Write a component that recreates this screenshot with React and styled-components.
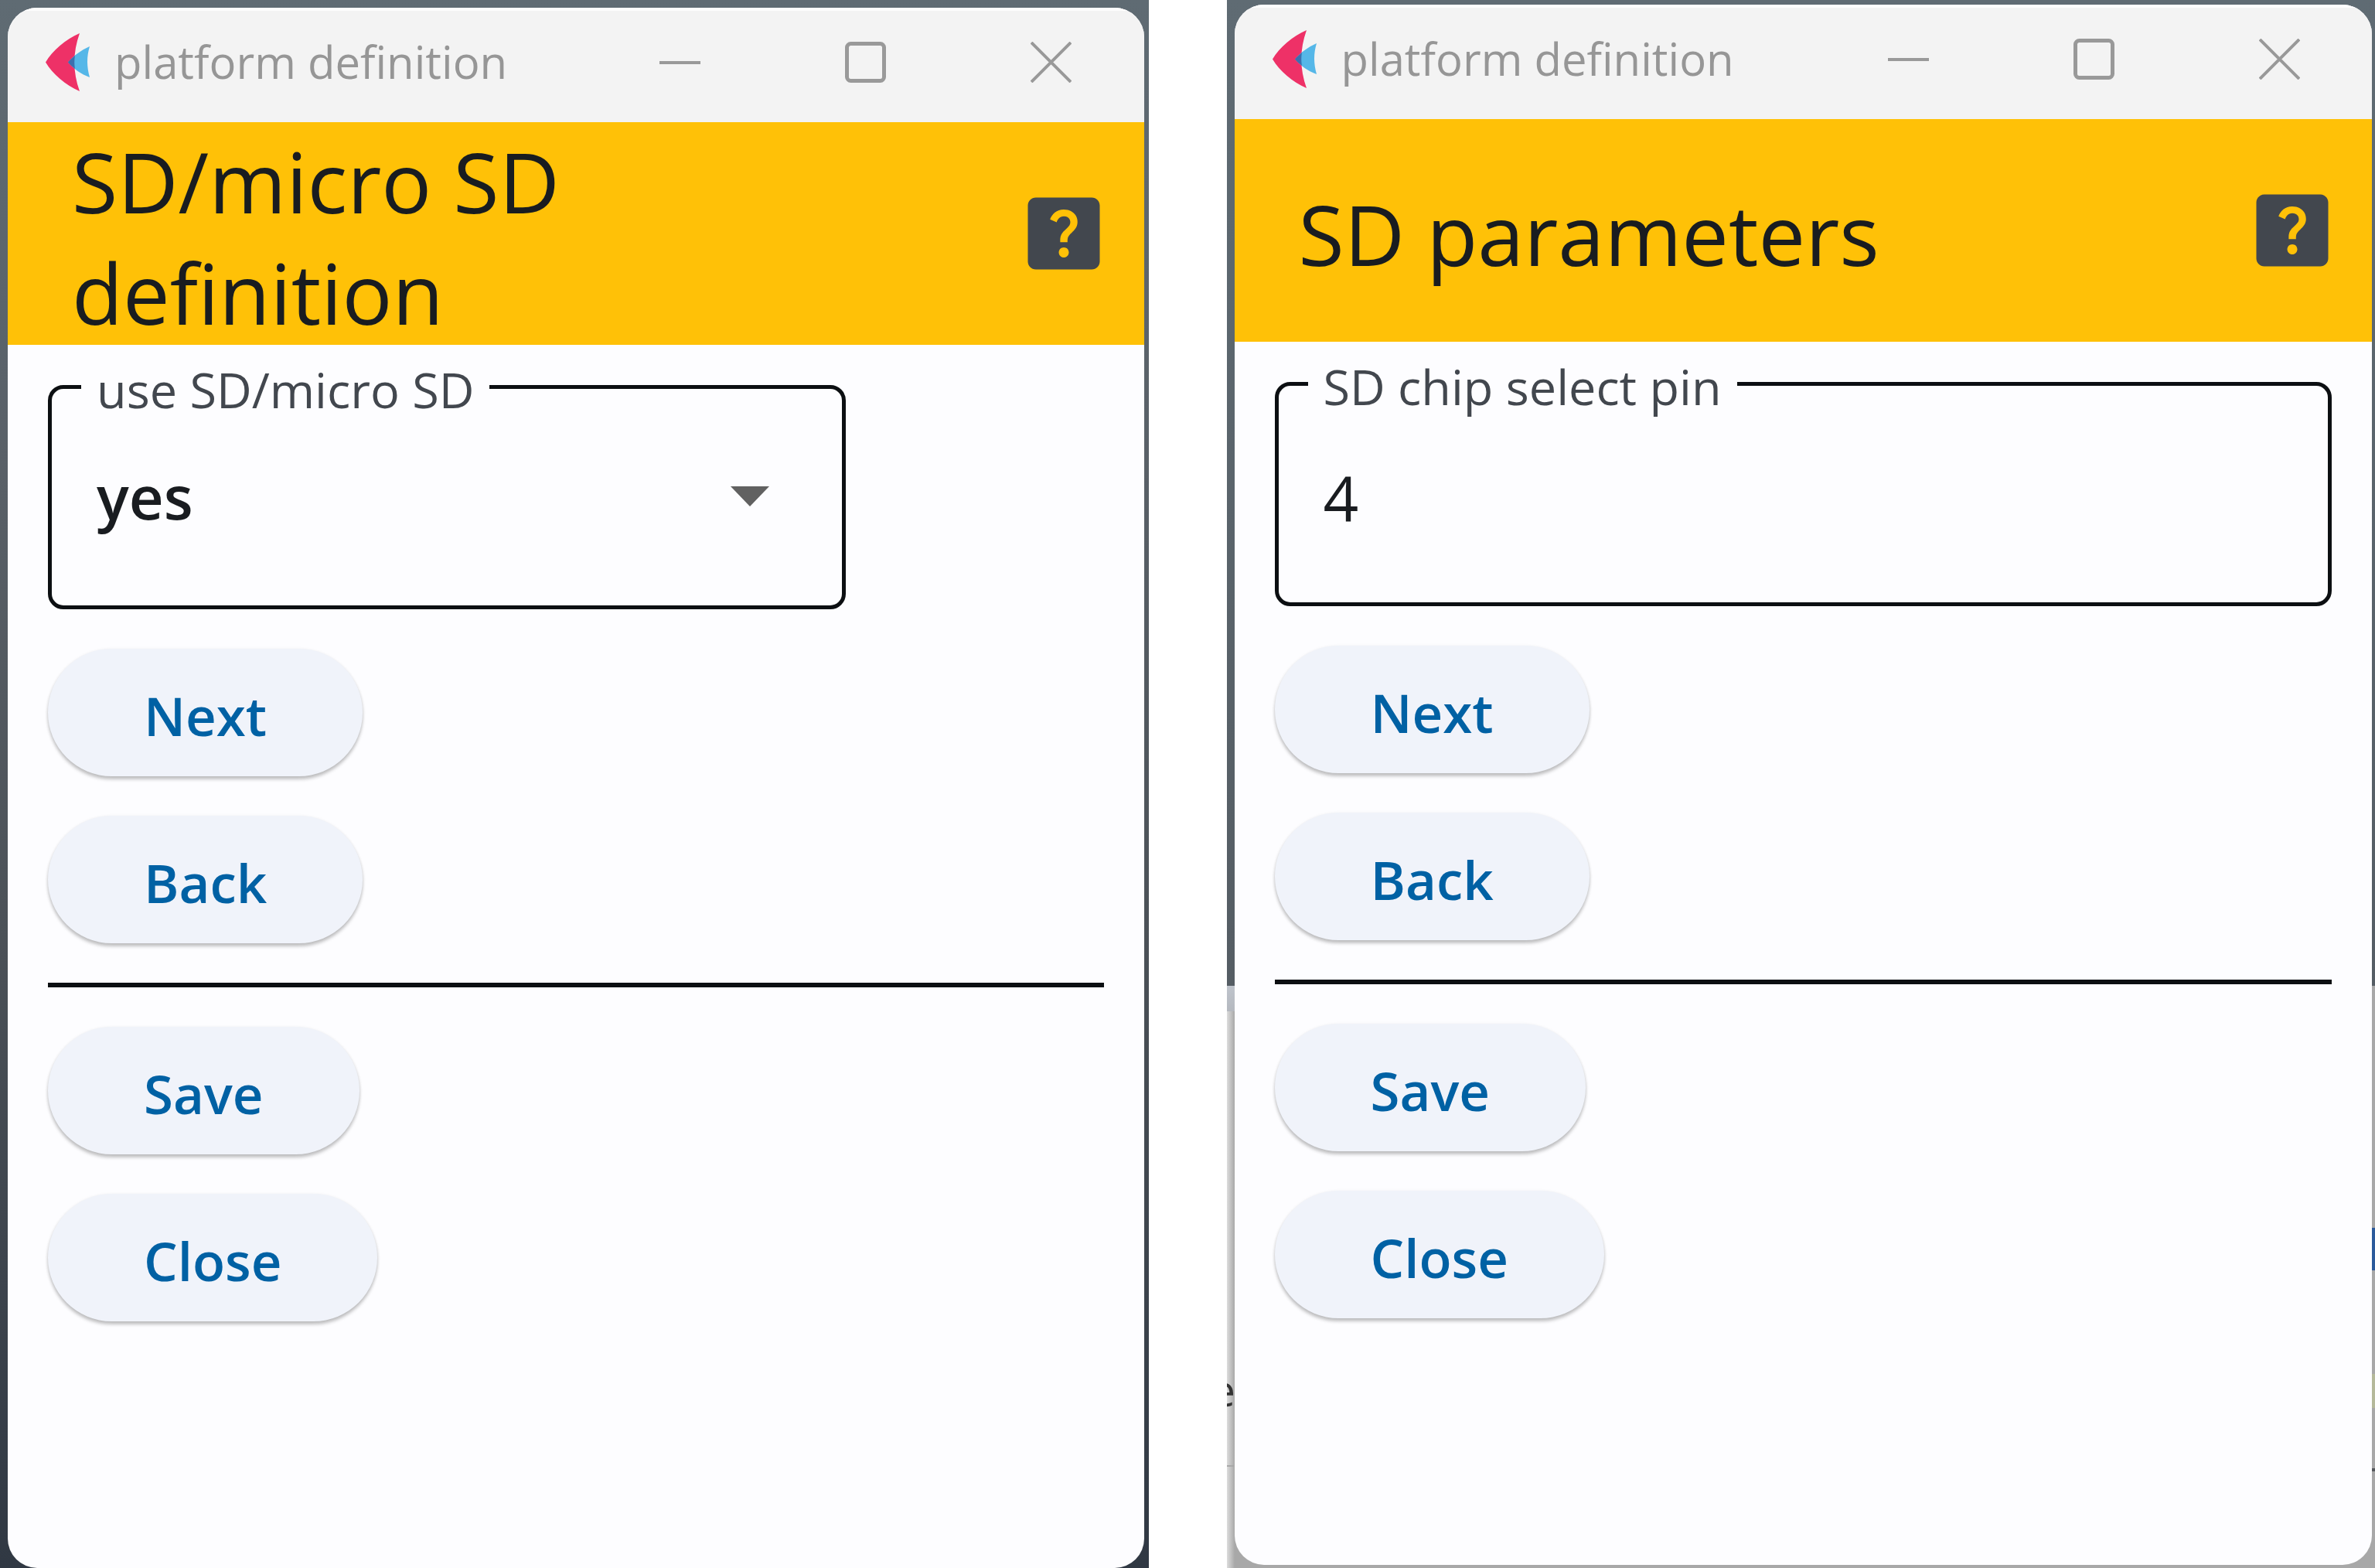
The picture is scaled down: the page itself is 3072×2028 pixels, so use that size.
import React, { useId } from "react";
import styled, { createGlobalStyle } from "styled-components";

const GlobalStyle = createGlobalStyle`
  * { box-sizing: border-box; }
  body {
    margin: 0;
    background: #ffffff;
    font-family: "Open Sans", "Noto Sans", sans-serif;
  }
`;

const Page = styled.div`
  display: grid;
  grid-template-columns: minmax(0, 1fr) minmax(0, 1fr);
  gap: 101px;
  min-height: 100vh;
`;

const DarkDesktop = styled.section`
  display: flex;
  padding: 10px 6px 0 10px;
  background: linear-gradient(#5f6b73, #596067 30%, #4b5157 60%, #303843);
`;

const MixedDesktop = styled.section`
  position: relative;
  display: flex;
  overflow: hidden;
  padding: 6px 4px 4px 10px;
  background:
    linear-gradient(#2b5a9b, #2b5a9b) right 1588px / 4px 55px no-repeat,
    linear-gradient(#b5b99a, #b5b99a) right 1777px / 4px 44px no-repeat,
    linear-gradient(#55585c, #55585c) right 1899px / 4px 4px no-repeat,
    linear-gradient(#a9a9a9, #a9a9a9) left 1895px / 10px 2px no-repeat,
    linear-gradient(#5f6b73, #555d64) left top / 100% 1275px no-repeat,
    linear-gradient(#bfc4cc, #b4b8bf) left 1275px / 10px 33px no-repeat,
    linear-gradient(90deg, #dcdcdc, #a8a8a8) left top / 10px 100% no-repeat,
    #a8a8a8;
`;

const DesktopText = styled.span`
  position: absolute;
  top: 1766px;
  left: -20px;
  font-size: 56px;
  line-height: 62px;
  color: #333333;
`;

const Window = styled.main`
  position: relative;
  flex: 1;
  min-width: 0;
  overflow: hidden;
  border-radius: 38px;
  background: #fdfdff;
`;

const TitleBar = styled.div`
  display: flex;
  align-items: center;
  height: 148px;
  padding: 0 0 12px 49px;
  border-top: 4px solid #fdfdfd;
  background: #f3f3f3;
`;

const WindowTitle = styled.span`
  flex: 1;
  padding-left: 32px;
  font-size: 58px;
  line-height: 80px;
  white-space: nowrap;
  color: #969696;
`;

const CaptionButton = styled.button`
  display: grid;
  place-items: center;
  width: 240px;
  height: 132px;
  padding: 0;
  border: 0;
  background: transparent;
`;

const AppBar = styled.header`
  display: flex;
  align-items: center;
  height: 288px;
  padding-left: 83px;
  background: #ffc107;
`;

const Heading = styled.h1`
  flex: 1;
  margin: 0;
  padding: 10px 83px 0 0;
  font-size: 108px;
  font-weight: 400;
  line-height: 144px;
  color: #191c20;
`;

const HelpButton = styled.button`
  display: grid;
  place-items: center;
  width: 207px;
  height: 207px;
  padding: 0;
  border: 0;
  background: transparent;
  color: #42474e;
`;

const Form = styled.form`
  display: flex;
  flex-direction: column;
  align-items: flex-start;
  gap: 51px;
  padding: 24px 52px;
`;

const Outline = styled.fieldset`
  width: ${(p) => (p.$compact ? "1032px" : "100%")};
  max-width: 100%;
  min-width: 0;
  height: 318px;
  margin: 0;
  padding: 0 38px;
  border: 5px solid #0c0f12;
  border-radius: 20px;
`;

const Legend = styled.legend`
  padding: 6px 20px 0;
  font-size: 63px;
  line-height: 55px;
  color: #42474e;
`;

const SelectBox = styled.div`
  display: grid;
  align-items: center;
  & > * { grid-area: 1 / 1; }
`;

const Select = styled.select`
  width: 100%;
  height: 222px;
  padding: 0 20px;
  border: 0;
  appearance: none;
  background: transparent;
  font-family: inherit;
  font-size: 78px;
  font-weight: 600;
  color: #191c20;
`;

const Arrow = styled.svg`
  justify-self: end;
  margin-right: 56px;
  pointer-events: none;
`;

const Input = styled.input`
  width: 100%;
  height: 230px;
  padding: 0 20px;
  border: 0;
  background: transparent;
  font-family: inherit;
  font-size: 80px;
  color: #191c20;
`;

const Button = styled.button`
  height: 165px;
  padding: 6px 124px 0;
  border: 0;
  border-radius: 83px;
  background: #f0f3fa;
  box-shadow: 0 4px 4px rgba(0, 0, 0, 0.22), 0 1px 4px rgba(0, 0, 0, 0.08);
  font-family: inherit;
  font-size: 69px;
  font-weight: 600;
  line-height: 96px;
  color: #0061a4;
`;

const Divider = styled.hr`
  width: 100%;
  height: 6px;
  margin: 0;
  border: 0;
  background: #0c0f12;
`;

function Logo() {
  return (
    <svg width="57" height="75" viewBox="0 0 57 75" aria-hidden="true">
      <path d="M44 0C26 8 9 22 0 37.500C9 53 26 67 44 75C35 50 35 25 44 0Z" fill="#ee3167" />
      <path d="M57 17C46 22 36 29 29 37.500C36 46 46 53 57 57C53 43 53 30 57 17Z" fill="#55b7e8" />
      <path d="M38 29C35 31.500 32 34 29 37.500C32 41 35 43.500 38 46C37 40 37 35 38 29Z" fill="#3c6fae" />
    </svg>
  );
}

function Captions() {
  return (
    <>
      <CaptionButton type="button" aria-label="Minimize">
        <svg width="53" height="53" viewBox="0 0 53 53" fill="none" stroke="#999999" strokeWidth="4">
          <path d="M0 27H53" />
        </svg>
      </CaptionButton>
      <CaptionButton type="button" aria-label="Maximize">
        <svg width="53" height="53" viewBox="0 0 53 53" fill="none" stroke="#999999" strokeWidth="5">
          <rect x="2.500" y="2.500" width="48" height="48" rx="5" />
        </svg>
      </CaptionButton>
      <CaptionButton type="button" aria-label="Close window">
        <svg width="53" height="53" viewBox="0 0 53 53" fill="none" stroke="#999999" strokeWidth="4">
          <path d="M1 1L52 52M52 1L1 52" />
        </svg>
      </CaptionButton>
    </>
  );
}

function HelpIcon() {
  return (
    <svg width="124" height="124" viewBox="0 0 24 24" fill="currentColor" aria-hidden="true">
      <path d="M19 3H5c-1.100 0-2 .9-2 2v14c0 1.100.9 2 2 2h14c1.100 0 2-.9 2-2V5c0-1.100-.9-2-2-2zm-6.990 15c-.7 0-1.260-.56-1.260-1.260 0-.71.56-1.250 1.260-1.250.71 0 1.250.54 1.250 1.250-.01.69-.54 1.260-1.250 1.260zm3.010-7.400c-.76 1.110-1.480 1.460-1.870 2.170-.16.29-.22.48-.22 1.410h-1.820c0-.49-.08-1.290.31-1.980.49-.87 1.420-1.390 1.960-2.160.57-.81.25-2.330-1.370-2.330-1.060 0-1.580.8-1.800 1.480l-1.650-.7C9.010 7.150 10.220 6 11.990 6c1.480 0 2.490.67 3.010 1.520.44.72.7 2.070.02 3.080z" />
    </svg>
  );
}

function DropdownField({ label, options }) {
  const id = useId();
  return (
    <Outline $compact>
      <Legend><label htmlFor={id}>{label}</label></Legend>
      <SelectBox>
        <Select id={id} defaultValue={options[0]}>
          {options.map((o) => <option key={o}>{o}</option>)}
        </Select>
        <Arrow width="50" height="26" viewBox="0 0 50 26" aria-hidden="true">
          <path d="M0 0H50L25 26Z" fill="#616161" />
        </Arrow>
      </SelectBox>
    </Outline>
  );
}

function TextField({ label, value }) {
  const id = useId();
  return (
    <Outline>
      <Legend><label htmlFor={id}>{label}</label></Legend>
      <Input id={id} type="text" defaultValue={value} />
    </Outline>
  );
}

function DefinitionWindow({ heading, children }) {
  return (
    <Window>
      <TitleBar>
        <Logo />
        <WindowTitle>platform definition</WindowTitle>
        <Captions />
      </TitleBar>
      <AppBar>
        <Heading>{heading}</Heading>
        <HelpButton type="button" aria-label="Help"><HelpIcon /></HelpButton>
      </AppBar>
      <Form onSubmit={(e) => e.preventDefault()}>
        {children}
        <Button type="button">Next</Button>
        <Button type="button">Back</Button>
        <Divider />
        <Button type="button">Save</Button>
        <Button type="button">Close</Button>
      </Form>
    </Window>
  );
}

export default function App() {
  return (
    <>
      <GlobalStyle />
      <Page>
        <DarkDesktop>
          <DefinitionWindow heading="SD/micro SD definition">
            <DropdownField label="use SD/micro SD" options={["yes"]} />
          </DefinitionWindow>
        </DarkDesktop>
        <MixedDesktop>
          <DesktopText aria-hidden="true">e</DesktopText>
          <DefinitionWindow heading="SD parameters">
            <TextField label="SD chip select pin" value="4" />
          </DefinitionWindow>
        </MixedDesktop>
      </Page>
    </>
  );
}
